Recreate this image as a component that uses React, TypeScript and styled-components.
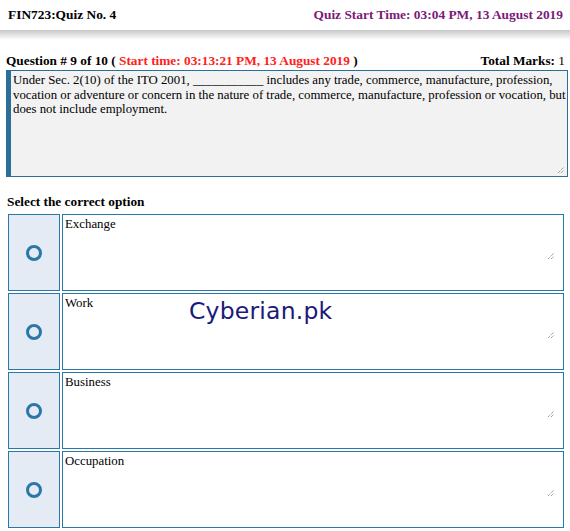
import React from 'react';
import styled, { createGlobalStyle } from 'styled-components';

const GlobalStyle = createGlobalStyle`
  html, body {
    margin: 0;
    padding: 0;
    background: #fff;
    font-family: "Liberation Serif", "Times New Roman", serif;
    color: #000;
  }
`;

const options = ['Exchange', 'Work', 'Business', 'Occupation'];

const Page = styled.div`
  width: 570px;
  height: 531px;
  overflow: hidden;
  position: relative;
`;

const TopBar = styled.div`
  display: flex;
  justify-content: space-between;
  align-items: center;
  padding: 3px 7px 0 8px;
  height: 24px;
  font-size: 13.4px;
  font-weight: bold;
`;

const QuizStart = styled.span`
  color: #7a1a7a;
`;

const ShadowBar = styled.div`
  height: 10px;
  margin-top: 3px;
  background: linear-gradient(to bottom, #c8c8c8, #f4f4f4 80%, #fff);
`;

const QuestionHead = styled.div`
  display: flex;
  justify-content: space-between;
  align-items: baseline;
  padding: 13px 5px 0 6px;
  font-size: 13.3px;
  font-weight: bold;
  height: 17px;
`;

const Red = styled.span`
  color: #ff2020;
`;

const Plain = styled.span`
  font-weight: normal;
`;

const QuestionBox = styled.div`
  margin: 0 2px 0 6px;
  height: 107px;
  box-sizing: border-box;
  border: 1px solid #2b6f99;
  border-left: 5px solid #2b6f99;
  background: #f2f2f2;
  padding: 2px 1px 0 2px;
  font-size: 12.8px;
  line-height: 14.5px;
  position: relative;
`;

const Grip = styled.svg<{ $top?: number }>`
  position: absolute;
  right: ${(p) => (p.$top !== undefined ? '8px' : '2px')};
  ${(p) => (p.$top !== undefined ? `top: ${p.$top}px;` : 'bottom: 2px;')}
`;

const SelectLabel = styled.div`
  font-size: 13.3px;
  font-weight: bold;
  padding: 17px 0 0 7px;
  height: 20px;
`;

const OptionList = styled.div`
  display: flex;
  flex-direction: column;
  gap: 2px;
  padding: 0 6px 0 8px;
`;

const OptionRow = styled.div`
  display: flex;
  gap: 2px;
  height: 77px;
`;

const RadioCell = styled.div`
  width: 52px;
  box-sizing: border-box;
  border: 1px solid #2a78a8;
  background: #e5ebf4;
  display: flex;
  align-items: center;
  justify-content: center;
`;

const Ring = styled.span`
  width: 10px;
  height: 10px;
  border: 3px solid #2a78a8;
  border-radius: 50%;
  margin-top: 1px;
`;

const AnswerCell = styled.div`
  flex: 1;
  box-sizing: border-box;
  border: 1px solid #2a78a8;
  background: #fff;
  padding: 1px 2px 0;
  font-size: 12.85px;
  line-height: 16px;
  position: relative;
`;

const Watermark = styled.div`
  position: absolute;
  left: 189px;
  top: 297px;
  font-family: Verdana, "DejaVu Sans", sans-serif;
  font-size: 23.5px;
  color: #1a1a78;
  letter-spacing: 0.2px;
`;

const ResizeGrip = ({ top }: { top?: number }) => (
  <Grip $top={top} width="8" height="8" viewBox="0 0 8 8">
    <path d="M1 7 L7 1 M4 7 L7 4" stroke="#777" strokeWidth="1" strokeDasharray="1 1" />
  </Grip>
);

export default function App() {
  return (
    <Page>
      <GlobalStyle />
      <TopBar>
        <span>FIN723:Quiz No. 4</span>
        <QuizStart>Quiz Start Time: 03:04 PM, 13 August 2019</QuizStart>
      </TopBar>
      <ShadowBar />
      <QuestionHead>
        <span>
          Question # 9 of 10 ( <Red>Start time: 03:13:21 PM, 13 August 2019</Red> )
        </span>
        <span>
          Total Marks: <Plain>1</Plain>
        </span>
      </QuestionHead>
      <QuestionBox>
        Under Sec. 2(10) of the ITO 2001, ___________ includes any trade, commerce, manufacture, profession,
        vocation or adventure or concern in the nature of trade, commerce, manufacture, profession or vocation, but
        does not include employment.
        <ResizeGrip />
      </QuestionBox>
      <SelectLabel>Select the correct option</SelectLabel>
      <OptionList>
        {options.map((o) => (
          <OptionRow key={o}>
            <RadioCell>
              <Ring />
            </RadioCell>
            <AnswerCell>
              {o}
              <ResizeGrip top={37} />
            </AnswerCell>
          </OptionRow>
        ))}
      </OptionList>
      <Watermark>Cyberian.pk</Watermark>
    </Page>
  );
}
